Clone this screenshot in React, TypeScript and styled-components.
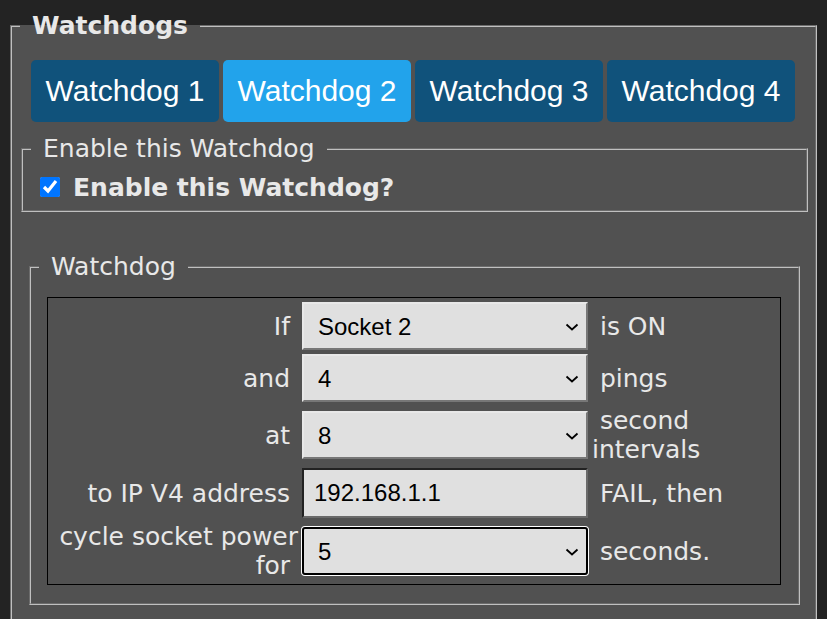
import { useState } from "react"
import styled, { createGlobalStyle } from "styled-components"

const GlobalStyle = createGlobalStyle`
  body {
    margin: 8px;
    background: #232323;
    font-family: "DejaVu Sans", Verdana, sans-serif;
    color: #e8e8e8;
  }
`

const tabs = ['Watchdog 1', 'Watchdog 2', 'Watchdog 3', 'Watchdog 4']

const rows = [
  { label: 'If', kind: 'select', value: 'Socket 2', options: ['Socket 1', 'Socket 2', 'Socket 3', 'Socket 4'], after: 'is ON' },
  { label: 'and', kind: 'select', value: '4', options: ['1', '2', '3', '4', '5', '6', '8', '10'], after: 'pings' },
  { label: 'at', kind: 'select', value: '8', options: ['2', '4', '8', '16', '30', '60'], after: 'second intervals' },
  { label: 'to IP V4 address', kind: 'input', value: '192.168.1.1', options: [], after: 'FAIL, then' },
  { label: 'cycle socket power for', kind: 'select', value: '5', options: ['1', '2', '5', '10', '30'], after: 'seconds.', focused: true },
]

const Chevron = () => (
  <ChevronSvg width="14" height="8" viewBox="0 0 14 8">
    <path d="M1.5 1.5 L7 6.5 L12.5 1.5" fill="none" stroke="#000" strokeWidth="1.8" />
  </ChevronSvg>
)

const App = () => {
  const [active, setActive] = useState(1)
  const [enabled, setEnabled] = useState(true)
  const [ip, setIp] = useState('192.168.1.1')

  return (
    <>
      <GlobalStyle />
      <Outer>
        <Legend $bold>Watchdogs</Legend>
        <TabBar>
          {tabs.map((t, i) => (
            <Tab key={t} $active={i === active} onClick={() => setActive(i)}>{t}</Tab>
          ))}
        </TabBar>
        <EnableGroup>
          <Legend>Enable this Watchdog</Legend>
          <CheckRow>
            <Check type="checkbox" checked={enabled} onChange={(e) => setEnabled(e.target.checked)} />
            <CheckLabel>Enable this Watchdog?</CheckLabel>
          </CheckRow>
        </EnableGroup>
        <RuleGroup>
          <Legend>Watchdog</Legend>
          <RuleTable>
            {rows.map((r) => (
              <Row key={r.label}>
                <Label>{r.label}{'\u00a0'}</Label>
                <Cell>
                  {r.kind === 'input' ? (
                    <TextInput value={ip} onChange={(e) => setIp(e.target.value)} />
                  ) : (
                    <SelectWrap>
                      <Select defaultValue={r.value} $focused={!!r.focused}>
                        {r.options.map((o) => <option key={o} value={o}>{o}</option>)}
                      </Select>
                      <Chevron />
                    </SelectWrap>
                  )}
                </Cell>
                <After>{'\u00a0'}{r.after}</After>
              </Row>
            ))}
          </RuleTable>
        </RuleGroup>
      </Outer>
    </>
  )
}

const Fieldset = styled.fieldset`
  border: 2px groove #c0c0c0;
  min-width: 0;
`

const Outer = styled(Fieldset)`
  margin: 3px 2px 0;
  padding: 0 0 30px 8px;
  background: #515151;
`

const Legend = styled.legend<{ $bold?: boolean }>`
  padding: 0 12px;
  font-size: 25px;
  line-height: 29px;
  font-weight: ${(p) => (p.$bold ? 'bold' : 'normal')};
  color: #e8e8e8;
`

const TabBar = styled.div`
  display: flex;
  gap: 4px;
  margin: 20px 0 0 11px;
`

const Tab = styled.button<{ $active: boolean }>`
  width: 188px;
  height: 62px;
  border: none;
  border-radius: 5px;
  padding: 0;
  font-family: "Liberation Sans", Arial, sans-serif;
  font-size: 30px;
  color: #fff;
  cursor: pointer;
  background: ${(p) => (p.$active ? '#22a3eb' : '#10527b')};
`

const EnableGroup = styled(Fieldset)`
  margin: 12px 7px 0 1px;
  padding: 10px 0 9px 8px;
`

const CheckRow = styled.label`
  display: flex;
  align-items: center;
  gap: 13px;
  height: 28px;
  margin-left: 9px;
`

const Check = styled.input`
  width: 20px;
  height: 20px;
  margin: 0;
`

const CheckLabel = styled.span`
  font-size: 25px;
  font-weight: bold;
`

const RuleGroup = styled(Fieldset)`
  margin: 40px 15px 0 9px;
  padding: 16px 9px 18px 8px;
`

const RuleTable = styled.div`
  display: grid;
  grid-template-columns: 250px 286px 1fr;
  column-gap: 4px;
  row-gap: 4px;
  margin: 0 8px;
  padding: 4px 0;
  border: 1px solid #000;
`

const Row = styled.div`
  display: contents;
`

const Label = styled.div`
  display: flex;
  align-items: center;
  justify-content: flex-end;
  text-align: right;
  font-size: 25px;
  line-height: 29px;
`

const Cell = styled.div`
  display: flex;
  align-items: center;
`

const After = styled.div`
  display: flex;
  align-items: center;
  font-size: 25px;
  line-height: 29px;
`

const SelectWrap = styled.div`
  position: relative;
  display: flex;
`

const ChevronSvg = styled.svg`
  position: absolute;
  right: 9px;
  top: 50%;
  margin-top: -3px;
  pointer-events: none;
`

const Select = styled.select<{ $focused: boolean }>`
  appearance: none;
  width: 286px;
  height: 48px;
  padding: 0 30px 0 14px;
  font-family: "Liberation Sans", Arial, sans-serif;
  font-size: 24px;
  color: #000;
  background-color: #e0e0e0;
  border: 2px solid;
  border-color: ${(p) => (p.$focused ? '#000' : '#e8e8e8 #777 #777 #e8e8e8')};
  border-radius: ${(p) => (p.$focused ? '3px' : '0')};
  box-shadow: ${(p) => (p.$focused ? '0 0 0 1px #fff' : 'none')};
  outline: none;
`

const TextInput = styled.input`
  box-sizing: border-box;
  width: 286px;
  height: 50px;
  padding: 0 10px;
  font-family: "Liberation Sans", Arial, sans-serif;
  font-size: 24px;
  color: #000;
  background: #e0e0e0;
  border: 2px solid;
  border-color: #222 #6a6a6a #6a6a6a #222;
  outline: none;
`

export default App
